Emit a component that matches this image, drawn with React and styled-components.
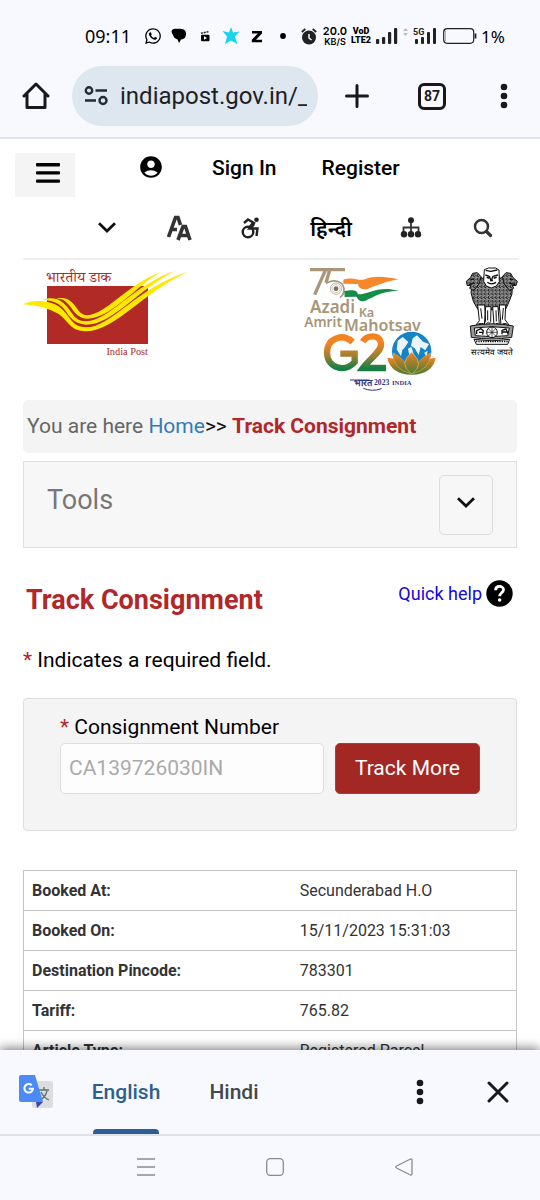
import React from "react";
import styled, { createGlobalStyle } from 'styled-components';
import { FaWhatsapp } from 'react-icons/fa';
import { MdAccountCircle } from 'react-icons/md';

const GlobalStyle = createGlobalStyle`
  * {
    box-sizing: border-box;
  }
  body {
    margin: 0;
    background: #fff;
    color: #000;
    font-family: Roboto, "Noto Sans", sans-serif;
    font-size: 21px;
  }
  button, input {
    font: inherit;
    color: inherit;
  }
  svg {
    display: block;
    flex: none;
  }
`;

const Screen = styled.div`
  display: flex;
  flex-direction: column;
  height: 100vh;
  overflow: hidden;
`;

const PlainButton = styled.button`
  display: flex;
  align-items: center;
  justify-content: center;
  padding: 0;
  border: 0;
  background: none;
  cursor: pointer;
`;

/* browser chrome */

const Chrome = styled.header`
  flex: none;
  padding-bottom: 11px;
  background: #f8f9ff;
  border-bottom: 2px solid #e2e4e8;
`;

const StatusBar = styled.div`
  display: flex;
  align-items: center;
  height: 66px;
  padding: 6px 32px 0 85px;
`;

const Clock = styled.span`
  width: 55px;
  font-family: "Noto Sans", sans-serif;
  font-size: 18px;
`;

const Slot = styled.span`
  display: flex;
  flex-direction: column;
  align-items: center;
  justify-content: center;
  flex: none;
  width: ${props => props.$w || 26}px;
  font-size: ${props => props.$size || 10}px;
  font-weight: ${props => props.$weight || 700};
  line-height: 1;
  font-family: ${props => props.$font || 'Roboto'}, sans-serif;
`;

const Small = styled.span`
  font-size: 9px;
`;

const Toolbar = styled.div`
  display: flex;
  align-items: center;
  height: 60px;
`;

const ToolButton = styled(PlainButton)`
  flex: none;
  width: ${props => props.$w || 72}px;
  height: 60px;
`;

const UrlBar = styled.label`
  display: flex;
  align-items: center;
  gap: 12px;
  flex: 1;
  min-width: 0;
  height: 60px;
  padding: 0 11px 0 12px;
  border-radius: 30px;
  background: #dee6ef;
`;

const UrlInput = styled.input`
  flex: 1;
  min-width: 0;
  padding: 0;
  border: 0;
  outline: 0;
  background: none;
  color: #1d2126;
  font-size: 24px;
`;

const TabCount = styled.span`
  padding: 4px 3px;
  border: 3px solid #17191d;
  border-radius: 6px;
  color: #17191d;
  font-size: 14px;
  font-weight: 700;
  line-height: 13px;
`;

/* site page */

const Page = styled.main`
  flex: 1;
  min-height: 0;
  overflow: hidden;
`;

const TopRow = styled.nav`
  display: flex;
  align-items: flex-start;
  padding: 14px 15px 0;
`;

const MenuButton = styled(PlainButton)`
  width: 60px;
  height: 44px;
  padding: 0 0 4px 5px;
  background: #f4f4f4;
`;

const Account = styled.span`
  margin-top: 1px;
  padding: 0 48px 0 63px;
`;

const TopLink = styled.a`
  margin-right: 45px;
  color: #000;
  font-weight: 500;
  line-height: 30px;
  text-decoration: none;
`;

const Content = styled.div`
  padding: 0 23px;
`;

const IconRow = styled.nav`
  display: flex;
  height: 63px;
  margin-right: -2px;
  padding-left: 48px;
  border-bottom: 2px solid #efefef;
`;

const IconButton = styled(PlainButton)`
  flex: ${props => props.$grow || 72} 1 0;
  font-weight: 600;
`;

const Logos = styled.div`
  display: flex;
  align-items: flex-start;
  height: 140px;
  padding-top: 5px;
`;

const RightLogos = styled.div`
  display: flex;
  gap: 27px;
  margin: 0 -2px 0 auto;
`;

const Breadcrumb = styled.nav`
  padding: 0 4px;
  border-radius: 5px;
  background: #f4f4f4;
  color: #666;
  line-height: 53px;
`;

const HomeLink = styled.a`
  color: #337ab7;
  text-decoration: none;
`;

const Dark = styled.span`
  color: #111;
`;

const Current = styled.strong`
  color: #b0282a;
  font-weight: 700;
`;

const Tools = styled.section`
  display: flex;
  align-items: flex-start;
  justify-content: space-between;
  height: 87px;
  margin-top: 8px;
  padding: 13px 23px;
  border: 1px solid #dfdfdf;
  background: #f7f7f7;
`;

const ToolsTitle = styled.h2`
  margin: 0;
  color: #777;
  font-size: 27px;
  font-weight: 400;
  line-height: 50px;
`;

const ExpandButton = styled(PlainButton)`
  width: 54px;
  height: 60px;
  padding-bottom: 6px;
  border: 1px solid #ddd;
  border-radius: 5px;
`;

const TitleRow = styled.div`
  display: flex;
  justify-content: space-between;
  padding: 30px 4px 0 3px;
`;

const Title = styled.h1`
  margin: 0;
  color: #b0282a;
  font-size: 27px;
  font-weight: 700;
  line-height: 44px;
`;

const HelpLink = styled.a`
  display: flex;
  align-items: center;
  gap: 4px;
  height: 30px;
  color: #1409d6;
  font-size: 18px;
  text-decoration: none;
`;

const Note = styled.p`
  margin: 22px 0 0;
  line-height: 32px;
`;

const Star = styled.span`
  color: #b0282a;
`;

const Panel = styled.form`
  margin-top: 22px;
  padding: 12px 36px 36px;
  border: 1px solid #ddd;
  border-radius: 4px;
  background: #f4f4f4;
`;

const Label = styled.label`
  display: block;
  line-height: 32px;
`;

const FieldRow = styled.div`
  display: flex;
  gap: 11px;
`;

const Field = styled.input`
  flex: 1;
  min-width: 0;
  height: 51px;
  padding: 0 8px 2px;
  border: 1px solid #ddd;
  border-radius: 5px;
  background: #fdfdfd;
  color: #aaa;
`;

const TrackButton = styled.button`
  flex: none;
  height: 51px;
  padding: 0 19px 2px;
  border: 1px solid #c8322c;
  border-radius: 5px;
  background: #a32823;
  color: #fff;
  cursor: pointer;
`;

const Table = styled.table`
  width: 100%;
  margin-top: 39px;
  border: 1px solid #c4c4c4;
  border-collapse: collapse;
  font-size: 16px;
`;

const HeadCell = styled.th`
  width: 54%;
  height: 40px;
  padding: 0 8px;
  border-bottom: 1px solid #c4c4c4;
  color: #333;
  font-weight: 700;
  text-align: left;
`;

const Cell = styled.td`
  padding: 0 10px;
  border-bottom: 1px solid #c4c4c4;
  color: #333;
`;

/* translate bar and system keys */

const TranslateBar = styled.div`
  display: flex;
  flex: none;
  height: 86px;
  padding-left: 19px;
  background: #f8f9ff;
  border-bottom: 2px solid #e0e1e6;
  box-shadow: 0 -2px 10px rgba(0, 0, 0, 0.5);
`;

const TranslateIcon = styled.span`
  display: flex;
  align-items: center;
  width: 53px;
`;

const Tab = styled(PlainButton)`
  position: relative;
  width: 108px;
  color: ${props => props.$active ? '#2c5f91' : '#43474e'};
  font-weight: 500;
  &::after {
    content: "";
    position: absolute;
    bottom: 0;
    left: 21px;
    right: 21px;
    height: 5px;
    border-radius: 4px 4px 0 0;
    background: ${props => props.$active ? '#2c5f91' : 'none'};
  }
`;

const BarActions = styled.div`
  display: flex;
  margin-left: auto;
`;

const BarButton = styled(PlainButton)`
  width: ${props => props.$w}px;
`;

const SystemKeys = styled.nav`
  display: flex;
  flex: none;
  justify-content: center;
  height: 64px;
  padding: 0 0 2px 10px;
  background: #f8f9ff;
`;

const KeyButton = styled(PlainButton)`
  width: 129px;
`;

const rows = [
  ['Booked At:', 'Secunderabad H.O'],
  ['Booked On:', '15/11/2023 15:31:03'],
  ['Destination Pincode:', '783301'],
  ['Tariff:', '765.82'],
  ['Article Type:', 'Registered Parcel'],
];

function Dots() {
  return (
    <svg width="8" height="26" viewBox="0 0 8 26" fill="#17191d">
      <circle cx="4" cy="4" r="3.3" />
      <circle cx="4" cy="13" r="3.3" />
      <circle cx="4" cy="22" r="3.3" />
    </svg>
  );
}

function Signal() {
  return (
    <svg width="22" height="16" viewBox="0 0 22 16" fill="#222">
      <rect x="0" y="11" width="3.2" height="5" rx="1" />
      <rect x="6" y="9" width="3.2" height="7" rx="1" />
      <rect x="12" y="4" width="3.2" height="12" rx="1" />
      <rect x="18" y="0" width="3.2" height="16" rx="1" />
    </svg>
  );
}

function Chevron() {
  return (
    <svg width="18" height="11" viewBox="0 0 18 11" fill="none" stroke="#111" strokeWidth="2.7">
      <path d="M1 1.200 9 9 17 1.200" />
    </svg>
  );
}

function StatusIcons() {
  return (
    <StatusBar>
      <Clock>09:11</Clock>
      <Slot><FaWhatsapp size={18} /></Slot>
      <Slot>
        <svg width="16" height="16" viewBox="0 0 16 16">
          <path d="M5 1H11.500Q15 2 15 6Q15 11 10 11.500L8 15 6.500 11.500Q2 10 2 6Z" />
          <path d="M.5 3.500Q1 .8 4 .8H10V3H4V8Q1 7 .5 3.500Z" />
        </svg>
      </Slot>
      <Slot>
        <svg width="10" height="11" viewBox="0 0 10 11">
          <path d="M1 2.300 8.500 .7" stroke="#222" strokeWidth="1.500" strokeDasharray="2 .8" />
          <rect x="1" y="3.700" width="8.500" height="6.500" rx="1" />
          <path d="M4 5.200v3.500L7 7Z" fill="#fff" />
        </svg>
      </Slot>
      <Slot>
        <svg width="18" height="18" viewBox="0 0 18 18" fill="#16d5ec">
          <path d="M9 0 11 5.500 17.500 4.500 12.800 9.500 15.500 17 9 13.500 3 17 5 9.500 .5 4 7 5.500Z" />
        </svg>
      </Slot>
      <Slot>
        <svg width="12" height="13" viewBox="0 0 12 13">
          <path d="M1 1H11V3.500L5 9.800H11V12.300H.800V9.800L6.800 3.500H1Z" />
        </svg>
      </Slot>
      <Slot>
        <svg width="6" height="6" viewBox="0 0 6 6"><circle cx="3" cy="3" r="2.900" /></svg>
      </Slot>
      <Slot>
        <svg width="16" height="17" viewBox="0 0 16 17" fill="none" stroke="#222">
          <circle cx="8" cy="9.500" r="7" fill="#222" stroke="none" />
          <path d="M.8 4 4.300 1M15.200 4 11.700 1" strokeWidth="1.800" />
          <path d="M8 6V10L10.500 12" stroke="#f8f9ff" strokeWidth="1.500" />
        </svg>
      </Slot>
      <Slot $size={11} $weight={600} $font="Inter">20.0<Small>KB/S</Small></Slot>
      <Slot $size={9} $weight={900}>VoD<span>LTE2</span></Slot>
      <Slot><Signal /></Slot>
      <Slot $w={10}>
        <svg width="5" height="16" viewBox="0 0 5 16" fill="#bbb"><path d="M0 3 2.500 0 5 3ZM0 5 2.500 8 5 5Z" /></svg>
      </Slot>
      <Slot $w={30}>
        <svg width="24" height="18" viewBox="0 0 24 18" fill="#222">
          <rect x="2" y="12" width="3" height="5" rx="1" />
          <rect x="8" y="10" width="3" height="7" rx="1" />
          <rect x="14" y="5" width="3" height="12" rx="1" />
          <rect x="20" y="1" width="3" height="16" rx="1" />
          <text x="0" y="7.500" fontSize="9" fontWeight="700">5G</text>
        </svg>
      </Slot>
      <Slot $w={40}>
        <svg width="34" height="16" viewBox="0 0 34 16" fill="none" stroke="#222">
          <rect x=".7" y=".7" width="30" height="14.600" rx="3.500" strokeWidth="1.200" />
          <path d="M2.500 3V13" stroke="#e99" />
          <path d="M32.500 5.500V10.500" strokeWidth="1.800" />
        </svg>
      </Slot>
      <Slot $size={17} $weight={400} $font="'Noto Sans'">1%</Slot>
    </StatusBar>
  );
}

function IndiaPostLogo() {
  return (
    <svg width="167" height="95" viewBox="69 30 501 285" role="img" aria-label="India Post">
      <rect x="141" y="93" width="303" height="174" fill="#b12a26" />
      <g fill="#ffe800">
        <path d="M70 148C95 132 150 135 176 154C212 180 212 216 257 217C335 218 410 95 565 50C430 110 345 228 257 229C202 228 205 188 165 172C140 158 105 151 70 148Z" />
        <path d="M127 134C150 127 170 127 190 144C220 170 218 197 258 199C330 196 400 88 527 47C410 105 340 208 258 209C205 205 205 165 176 148C160 138 145 135 127 134Z" />
        <path d="M168 130C190 127 203 129 217 143C235 162 238 179 262 181C320 176 380 90 482 50C400 102 330 190 262 191C222 187 220 158 197 140C190 134 180 131 168 130Z" />
      </g>
      <g fill="#b12a26">
        <text x="138" y="81" fontSize="45" fontFamily="'Noto Serif Devanagari', 'Noto Sans Devanagari', serif">भारतीय डाक</text>
        <text x="444" y="300" fontSize="31" fontFamily="'Liberation Serif', serif" textAnchor="end">India Post</text>
      </g>
    </svg>
  );
}

function MahotsavLogo() {
  return (
    <svg width="135" height="128" viewBox="39 33 405 384" role="img" aria-label="Azadi Ka Amrit Mahotsav, G20">
      <defs>
        <linearGradient id="g20" x1="0" y1="0" x2="0" y2="1">
          <stop offset="0.2" stopColor="#f58220" />
          <stop offset="0.6" stopColor="#a08032" />
          <stop offset="1" stopColor="#168044" />
        </linearGradient>
        <linearGradient id="petal" x1="0" y1="0" x2="0" y2="1">
          <stop offset="0" stopColor="#f58220" />
          <stop offset="1" stopColor="#3f7c3a" />
        </linearGradient>
      </defs>
      <g fill="none" stroke="#a8957a" strokeWidth="10">
        <path d="M60 47H107L74 122M107 47H165M119 48 108 86" />
        <path d="M108 88C132 73 160 83 162 105C163 118 158 125 150 130" strokeWidth="5" />
        <circle cx="138" cy="104" r="17" strokeWidth="2" />
        <circle cx="138" cy="104" r="12" strokeWidth="3" strokeDasharray="2 2" />
      </g>
      <circle cx="138" cy="104" r="7" fill="#806b58" />
      <path d="M160 77C190 67 205 82 225 76C255 64 285 68 326 76C290 82 265 92 235 104C212 111 202 96 205 90L160 89Z" fill="#f7872b" />
      <path d="M163 111C195 105 202 111 204 121C235 122 265 92 327 111C278 110 255 127 226 140C209 147 202 133 200 128L164 129Z" fill="#168c49" />
      <g fill="#a8957a" fontFamily="'Noto Sans', sans-serif" fontWeight="600">
        <text x="60" y="178" fontSize="51">Azadi</text>
        <text x="206" y="190" fontSize="38">Ka</text>
        <text x="43" y="218" fontSize="41">Amrit</text>
        <text x="162" y="230" fontSize="48">Mahotsav</text>
      </g>
      <path d="M188 264C155 235 111 255 111 296C112 342 164 358 194 324V299H151" fill="none" stroke="url(#g20)" strokeWidth="19" />
      <path d="M218 263C230 243 268 239 273 267C277 291 244 309 219 342H288" fill="none" stroke="url(#g20)" strokeWidth="19" />
      <circle cx="365" cy="292" r="59" fill="#1683c5" />
      <path d="M323 260 338 249 355 264 345 280 337 288 333 307 320 286ZM368 253 381 244 399 263 417 270 406 289 392 279 386 303 374 283 363 275ZM354 284 364 278 373 307 361 318ZM403 296 413 290 409 309Z" fill="#eaf5fc" />
      <path d="M292 312Q329 309 359 353L365 359 371 353Q401 309 437 312Q427 362 365 362Q303 362 292 312Z" fill="url(#petal)" />
      <path d="M310 297Q345 315 365 357Q385 315 421 297Q424 345 365 360Q306 345 310 297Z" fill="url(#petal)" stroke="#f2a13b" strokeWidth="2" />
      <path d="M365 295Q323 331 365 360Q407 331 365 295Z" fill="url(#petal)" stroke="#f3bd5b" strokeWidth="2" />
      <g fill="#343487" fontFamily="'Liberation Serif', serif" fontWeight="700">
        <text x="191" y="395" fontSize="28">भारत</text>
        <text x="252" y="394" fontSize="23">2023</text>
        <text x="306" y="393" fontSize="20">INDIA</text>
      </g>
      <path d="M180 378H238M220 403Q246 414 275 404" fill="none" stroke="#343487" strokeWidth="3" />
    </svg>
  );
}

function Emblem() {
  return (
    <svg width="54" height="92" viewBox="525 33 162 276" role="img" aria-label="National emblem of India">
      <defs>
        <pattern id="mane" width="11" height="11" patternUnits="userSpaceOnUse">
          <rect width="11" height="11" fill="#222" />
          <path d="M0 3Q4 8 8 2M3 11Q7 5 11 8M8 0Q7 3 11 4" fill="none" stroke="#fff" strokeWidth="2" />
        </pattern>
      </defs>
      <g stroke="#111" strokeWidth="3" strokeLinejoin="round">
        <path d="M548 82 562 65 580 74 588 57H622L630 73 650 65 667 82 666 120 654 151 646 167H564L550 142 543 116Z" fill="url(#mane)" />
        <path d="M562 56 548 58 541 71 529 82 532 95 543 94 539 103 551 110 567 90 573 68Z" fill="url(#mane)" />
        <path d="M648 56 662 58 669 71 682 82 678 95 667 94 671 103 659 110 643 90 637 68Z" fill="url(#mane)" />
        <path d="M583 47 596 42H617L627 48 628 83 619 96 604 102 589 96 581 82Z" fill="#fff" />
        <path d="M587 49 602 52 622 48M586 63 598 67 603 80 609 67 624 63M592 85Q604 94 618 85M542 77 552 75M659 75 669 77M537 92 553 87M657 87 675 92" fill="none" strokeWidth="4" />
        <path d="M590 70 598 73M611 73 620 70M601 79H609" strokeWidth="5" />
        <path d="M563 153H584L587 202 580 213H558L568 200ZM587 158H603L602 203 594 213H583ZM608 158H624L628 213H612ZM628 153H647L645 197 657 213H633Z" fill="#fff" />
        <path d="M572 163 576 194M593 169V199M618 169 619 202M640 162 637 197M565 209H581M589 209 596 204M617 209H625M638 209H650" fill="none" />
        <path d="M541 216Q606 203 670 216L665 250Q605 260 544 250Z" fill="#999" />
        <path d="M553 222Q606 214 658 222L653 245Q605 251 556 245Z" fill="#fff" />
        <path d="M560 240V230L573 224 580 230 578 242M567 235H577M636 241V229L648 225 654 239M637 234H650" fill="none" strokeWidth="4" />
        <circle cx="606" cy="235" r="16" fill="#fff" />
        <path d="M606 219V251M590 235H622M595 224 617 246M617 224 595 246" strokeWidth="2" />
        <path d="M552 256Q607 265 659 256L653 271H559Z" fill="#fff" />
        <path d="M558 262H654" strokeWidth="5" strokeDasharray="4 3" />
      </g>
      <text x="606" y="302" textAnchor="middle" fontSize="25" fontWeight="500" fontFamily="sans-serif">सत्यमेव जयते</text>
    </svg>
  );
}

function TranslateLogo() {
  return (
    <svg width="34" height="34" viewBox="0 0 34 34">
      <rect x="13" y="6" width="21" height="27" rx="2" fill="#dcdddf" />
      <path d="M20 15H30M25 12V15M28 16Q26 23 21 25M22 17Q25 23 30 25" fill="none" stroke="#5b7075" strokeWidth="1.300" />
      <path d="M17 27H24L18 33Z" fill="#3949ab" />
      <path d="M2 0H16L24 27H2Q0 27 0 25V2Q0 0 2 0Z" fill="#4c8bf5" />
      <path d="M12.700 10.200A4.300 4.300 0 1 0 14 13.700H9.700" fill="none" stroke="#fff" strokeWidth="2" />
    </svg>
  );
}

function App() {
  return (
    <Screen>
      <GlobalStyle />
      <Chrome>
        <StatusIcons />
        <Toolbar>
          <ToolButton aria-label="Home page">
            <svg width="28" height="28" viewBox="0 0 28 28" fill="none" stroke="#17191d" strokeWidth="3" strokeLinejoin="round" strokeLinecap="round">
              <path d="M2 14 14 2 26 14M5 12V25.500H23V12" />
            </svg>
          </ToolButton>
          <UrlBar>
            <svg width="24" height="20" viewBox="0 0 24 20" fill="none" stroke="#222b33" strokeWidth="2.400">
              <circle cx="5" cy="4.500" r="3.200" />
              <path d="M11.500 4.500H23M1 14.500H12" />
              <circle cx="19" cy="14.500" r="3.500" />
            </svg>
            <UrlInput aria-label="Address" defaultValue="indiapost.gov.in/_" />
          </UrlBar>
          <ToolButton $w={78} aria-label="New tab">
            <svg width="24" height="24" viewBox="0 0 24 24" stroke="#17191d" strokeWidth="3" strokeLinecap="round">
              <path d="M12 1.500V22.500M1.500 12H22.500" />
            </svg>
          </ToolButton>
          <ToolButton aria-label="Tabs"><TabCount>87</TabCount></ToolButton>
          <ToolButton aria-label="Browser menu"><Dots /></ToolButton>
        </Toolbar>
      </Chrome>

      <Page>
        <TopRow>
          <MenuButton aria-label="Menu">
            <svg width="24" height="20" viewBox="0 0 24 20" fill="#000">
              <rect y="0" width="24" height="3.400" rx="1" />
              <rect y="8.200" width="24" height="3.400" rx="1" />
              <rect y="16.400" width="24" height="3.400" rx="1" />
            </svg>
          </MenuButton>
          <Account><MdAccountCircle size={26} /></Account>
          <TopLink href="#signin">Sign In</TopLink>
          <TopLink href="#register">Register</TopLink>
        </TopRow>
        <Content>
          <IconRow>
            <IconButton aria-label="More"><Chevron /></IconButton>
            <IconButton aria-label="Text size">
              <svg width="26" height="26" viewBox="0 0 26 26" fill="none" stroke="#333" strokeWidth="3.600">
                <path d="M2.500 22 9.500 2.500H12L14.500 10M6 14.500H11" />
                <path d="M12 25 17 11.500H19.500L24 25M14 20.500H23" />
              </svg>
            </IconButton>
            <IconButton aria-label="Accessibility">
              <svg width="20" height="22" viewBox="0 0 20 22" fill="none" stroke="#222" strokeWidth="2.400">
                <circle cx="15.500" cy="2.800" r="2.300" fill="#222" stroke="none" />
                <circle cx="7" cy="15" r="5.300" />
                <path d="M3 6 7 2.500 13 6 8.500 11.500H16.500L15.500 19" />
                <path d="M12.500 6.500 9 11" strokeWidth="4" />
              </svg>
            </IconButton>
            <IconButton $grow={88}>हिन्दी</IconButton>
            <IconButton aria-label="Sitemap">
              <svg width="22" height="21" viewBox="0 0 22 21" fill="#222">
                <path d="M11 4V17M3.500 17V10.500H18.500V17" fill="none" stroke="#333" strokeWidth="1.800" />
                <circle cx="11" cy="3.300" r="3" />
                <circle cx="4" cy="17.300" r="3.200" />
                <circle cx="11" cy="17.300" r="3.200" />
                <circle cx="18" cy="17.300" r="3.200" />
              </svg>
            </IconButton>
            <IconButton aria-label="Search">
              <svg width="20" height="20" viewBox="0 0 20 20" fill="none" stroke="#333" strokeLinecap="round">
                <circle cx="8.500" cy="8.500" r="6.500" strokeWidth="2.500" />
                <path d="M13.500 13.500 17.500 17.500" strokeWidth="3.200" />
              </svg>
            </IconButton>
          </IconRow>
          <Logos>
            <IndiaPostLogo />
            <RightLogos>
              <MahotsavLogo />
              <Emblem />
            </RightLogos>
          </Logos>
          <Breadcrumb>
            You are here <HomeLink href="#home">Home</HomeLink><Dark>&gt;&gt;</Dark> <Current>Track Consignment</Current>
          </Breadcrumb>
          <Tools>
            <ToolsTitle>Tools</ToolsTitle>
            <ExpandButton aria-label="Expand tools"><Chevron /></ExpandButton>
          </Tools>
          <TitleRow>
            <Title>Track Consignment</Title>
            <HelpLink href="#help">
              Quick help
              <svg width="27" height="27" viewBox="0 0 27 27">
                <circle cx="13.500" cy="13.500" r="13.200" />
                <path d="M9.500 10.200C9.700 5.200 17.500 5.300 17.500 9.800C17.500 12.700 13.600 12.800 13.600 16.300" fill="none" stroke="#fff" strokeWidth="2.800" />
                <circle cx="13.600" cy="20" r="1.800" fill="#fff" />
              </svg>
            </HelpLink>
          </TitleRow>
          <Note><Star>*</Star> Indicates a required field.</Note>
          <Panel onSubmit={e => e.preventDefault()}>
            <Label htmlFor="consignment"><Star>*</Star> Consignment Number</Label>
            <FieldRow>
              <Field id="consignment" defaultValue="CA139726030IN" />
              <TrackButton type="submit">Track More</TrackButton>
            </FieldRow>
          </Panel>
          <Table>
            <tbody>
              {rows.map(([name, value]) => (
                <tr key={name}>
                  <HeadCell scope="row">{name}</HeadCell>
                  <Cell>{value}</Cell>
                </tr>
              ))}
            </tbody>
          </Table>
        </Content>
      </Page>

      <TranslateBar>
        <TranslateIcon><TranslateLogo /></TranslateIcon>
        <Tab $active>English</Tab>
        <Tab>Hindi</Tab>
        <BarActions>
          <BarButton $w={72} aria-label="Translate options"><Dots /></BarButton>
          <BarButton $w={84} aria-label="Close">
            <svg width="22" height="22" viewBox="0 0 22 22" stroke="#17191d" strokeWidth="3" strokeLinecap="round">
              <path d="M2 2 20 20M20 2 2 20" />
            </svg>
          </BarButton>
        </BarActions>
      </TranslateBar>
      <SystemKeys>
        <KeyButton aria-label="Recent apps">
          <svg width="18" height="18" viewBox="0 0 18 18" stroke="#888a90" strokeWidth="1.300">
            <path d="M0 1H18M0 9H18M0 17H18" />
          </svg>
        </KeyButton>
        <KeyButton aria-label="Home">
          <svg width="18" height="18" viewBox="0 0 18 18" fill="none" stroke="#888a90" strokeWidth="1.300">
            <rect x=".7" y=".7" width="16.600" height="16.600" rx="3.500" />
          </svg>
        </KeyButton>
        <KeyButton aria-label="Back">
          <svg width="18" height="18" viewBox="0 0 18 18" fill="none" stroke="#888a90" strokeWidth="1.300">
            <path d="M1.500 8 15.500 1Q17 .6 17 2.500V15.500Q17 17.400 15.500 17L1.500 10Q0 9 1.500 8Z" />
          </svg>
        </KeyButton>
      </SystemKeys>
    </Screen>
  );
}

export default App;
